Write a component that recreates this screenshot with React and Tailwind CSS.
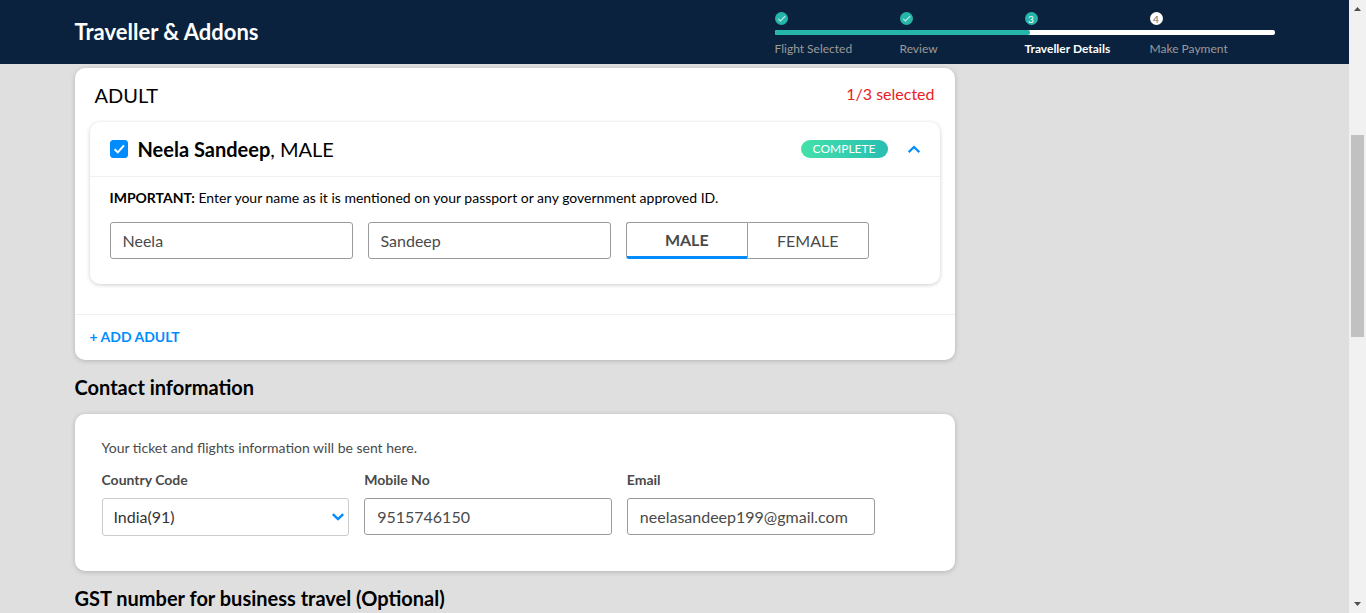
import React, { useState } from "react";

const steps = [
  { label: "Flight Selected", state: "done" },
  { label: "Review", state: "done" },
  { label: "Traveller Details", state: "current" },
  { label: "Make Payment", state: "next" },
];

const cardClass =
  "w-full max-w-[880px] rounded-[10px] bg-white shadow-[0_1px_5px_rgba(0,0,0,0.2)]";
const inputClass =
  "h-[37px] w-full rounded-[3px] border border-[#9b9b9b] bg-white px-3 text-base text-[#4a4a4a] outline-none";

function StepDot({ state, number }) {
  if (state === "done") {
    return (
      <span className="flex size-[13px] items-center justify-center rounded-full bg-[#26b5a9]">
        <svg viewBox="0 0 13 13" className="size-[13px]" fill="none" stroke="#c4ebe7" strokeWidth="1.1">
          <path d="M3.2 6.8 5.4 9 10.2 4.2" />
        </svg>
      </span>
    );
  }
  const tone = state === "current" ? "bg-[#26b5a9] text-white" : "bg-white text-[#6b6b6b]";
  return (
    <span className={`flex size-[13px] items-center justify-center rounded-full text-[10px] leading-3 ${tone}`}>
      {number}
    </span>
  );
}

function Stepper() {
  return (
    <div className="w-[500px] pt-3">
      <ol className="grid grid-cols-4">
        {steps.map((s, i) => (
          <li key={s.label}>
            <StepDot state={s.state} number={i + 1} />
          </li>
        ))}
      </ol>
      <div className="mt-[5px] h-[5px] overflow-hidden rounded-[2px] bg-white">
        <div className="h-full w-[51%] rounded-r-[2px] bg-[#26b5a9]" />
      </div>
      <ol className="mt-[6px] grid grid-cols-4 text-xs">
        {steps.map((s) => (
          <li
            key={s.label}
            className={s.state === "current" ? "font-bold text-white" : "text-[#9b9b9b]"}
          >
            {s.label}
          </li>
        ))}
      </ol>
    </div>
  );
}

function Header() {
  return (
    <header className="h-16 shrink-0 bg-[#0a223d]">
      <div className="mx-auto flex h-full max-w-[1200px] items-start justify-between">
        <h1 className="text-[22px] leading-[64px] font-bold text-white">Traveller &amp; Addons</h1>
        <Stepper />
      </div>
    </header>
  );
}

function TravellerCard() {
  const [gender, setGender] = useState("MALE");
  return (
    <section className={cardClass}>
      <div className="flex h-[54px] items-center justify-between px-5">
        <h2 className="text-xl">ADULT</h2>
        <span className="pb-[2px] text-base text-[#eb2026]">1/3 selected</span>
      </div>
      <div className="mx-[15px] rounded-[10px] shadow-[0_1px_4px_rgba(0,0,0,0.2)]">
        <div className="flex h-[55px] items-center border-b border-[#f0f0f0] px-5">
          <label className="flex items-center gap-[10px] text-xl">
            <span className="grid size-[18px]">
              <input
                type="checkbox"
                defaultChecked
                className="peer col-start-1 row-start-1 size-[18px] appearance-none rounded-[3px] border border-[#008cff] bg-white checked:bg-[#008cff]"
              />
              <svg
                viewBox="0 0 18 18"
                className="pointer-events-none col-start-1 row-start-1 size-[18px] opacity-0 peer-checked:opacity-100"
                fill="none"
                stroke="#fff"
                strokeWidth="2"
              >
                <path d="M4.6 9.2 7.8 12.4 14 5.4" />
              </svg>
            </span>
            <span>
              <b className="font-bold">Neela Sandeep</b>, MALE
            </span>
          </label>
          <span className="ml-auto h-[18px] rounded-full bg-linear-to-r from-[#43e1a8] to-[#28beb2] px-3 text-xs leading-[18px] text-white">
            COMPLETE
          </span>
          <button type="button" aria-label="Collapse traveller" className="ml-5 size-3">
            <svg viewBox="0 0 12 12" className="size-3" fill="none" stroke="#008cff" strokeWidth="2.2">
              <path d="M0.7 9.2 6 4 11.3 9.2" />
            </svg>
          </button>
        </div>
        <div className="px-5 pt-3 pb-[25px]">
          <p className="text-sm leading-[18px]">
            <b className="font-bold">IMPORTANT:</b> Enter your name as it is mentioned on your passport or any
            government approved ID.
          </p>
          <div className="mt-[15px] grid max-w-[759px] grid-cols-3 gap-[15px]">
            <input type="text" aria-label="First name" defaultValue="Neela" className={inputClass} />
            <input type="text" aria-label="Last name" defaultValue="Sandeep" className={inputClass} />
            <div className="grid h-[37px] grid-cols-2 text-base text-[#4a4a4a]">
              {["MALE", "FEMALE"].map((g) => (
                <button
                  key={g}
                  type="button"
                  aria-pressed={gender === g}
                  onClick={() => setGender(g)}
                  className={`border border-[#9b9b9b] pt-px first:rounded-l-[3px] first:border-r-0 last:rounded-r-[3px] ${
                    gender === g ? "border-b-[3px] border-b-[#008cff] font-bold" : "pb-px"
                  }`}
                >
                  {g}
                </button>
              ))}
            </div>
          </div>
        </div>
      </div>
      <div className="mt-[30px] flex h-[46px] items-start border-t border-[#f0f0f0] px-[15px] pt-3">
        <button type="button" className="text-sm font-bold text-[#008cff]">
          + ADD ADULT
        </button>
      </div>
    </section>
  );
}

function ContactCard() {
  return (
    <section className={`${cardClass} px-[27px] pt-6 pb-[35px] text-[#4a4a4a]`}>
      <p className="text-sm">Your ticket and flights information will be sent here.</p>
      <div className="mt-3 grid max-w-[773px] grid-cols-3 gap-[15px]">
        <div>
          <label htmlFor="country" className="block pb-2 text-sm font-bold">Country Code</label>
          <div className="grid">
            <select
              id="country"
              className="col-start-1 row-start-1 h-[38px] w-full appearance-none rounded-[3px] border border-[#cccccc] bg-white px-[11px] text-base text-[#333333]"
            >
              <option>India(91)</option>
            </select>
            <svg
              viewBox="0 0 12 8"
              className="pointer-events-none col-start-1 row-start-1 mr-[5px] h-2 w-3 self-center justify-self-end"
              fill="none"
              stroke="#008cff"
              strokeWidth="2.4"
            >
              <path d="M0.8 1.2 6 6.2 11.2 1.2" />
            </svg>
          </div>
        </div>
        <div>
          <label htmlFor="mobile" className="block pb-2 text-sm font-bold">Mobile No</label>
          <input id="mobile" type="tel" defaultValue="9515746150" className={inputClass} />
        </div>
        <div>
          <label htmlFor="email" className="block pb-2 text-sm font-bold">Email</label>
          <input id="email" type="email" defaultValue="neelasandeep199@gmail.com" className={inputClass} />
        </div>
      </div>
    </section>
  );
}

function SectionTitle({ children }) {
  return <h2 className="text-xl leading-[54px] font-bold">{children}</h2>;
}

function ScrollTrack() {
  return (
    <div aria-hidden="true" className="flex w-[17px] shrink-0 flex-col items-center bg-[#f1f1f1]">
      <svg viewBox="0 0 17 17" className="size-[17px] shrink-0" fill="#505050">
        <path d="M5 11 8.5 7 12 11z" />
      </svg>
      <div className="flex w-[13px] grow flex-col">
        <div className="grow-118" />
        <div className="h-[35%] bg-[#c1c1c1]" />
        <div className="grow-259" />
      </div>
      <svg viewBox="0 0 17 17" className="size-[17px] shrink-0" fill="#505050">
        <path d="M5 6 8.5 10 12 6z" />
      </svg>
    </div>
  );
}

export default function App() {
  return (
    <div className="flex h-screen overflow-hidden bg-[#dfdfdf] font-['Lato',sans-serif] text-black">
      <div className="flex min-w-0 grow flex-col">
        <Header />
        <main className="min-h-0 grow overflow-hidden pt-1">
          <div className="mx-auto max-w-[1200px]">
            <TravellerCard />
            <SectionTitle>Contact information</SectionTitle>
            <ContactCard />
            <SectionTitle>GST number for business travel (Optional)</SectionTitle>
          </div>
        </main>
      </div>
      <ScrollTrack />
    </div>
  );
}
